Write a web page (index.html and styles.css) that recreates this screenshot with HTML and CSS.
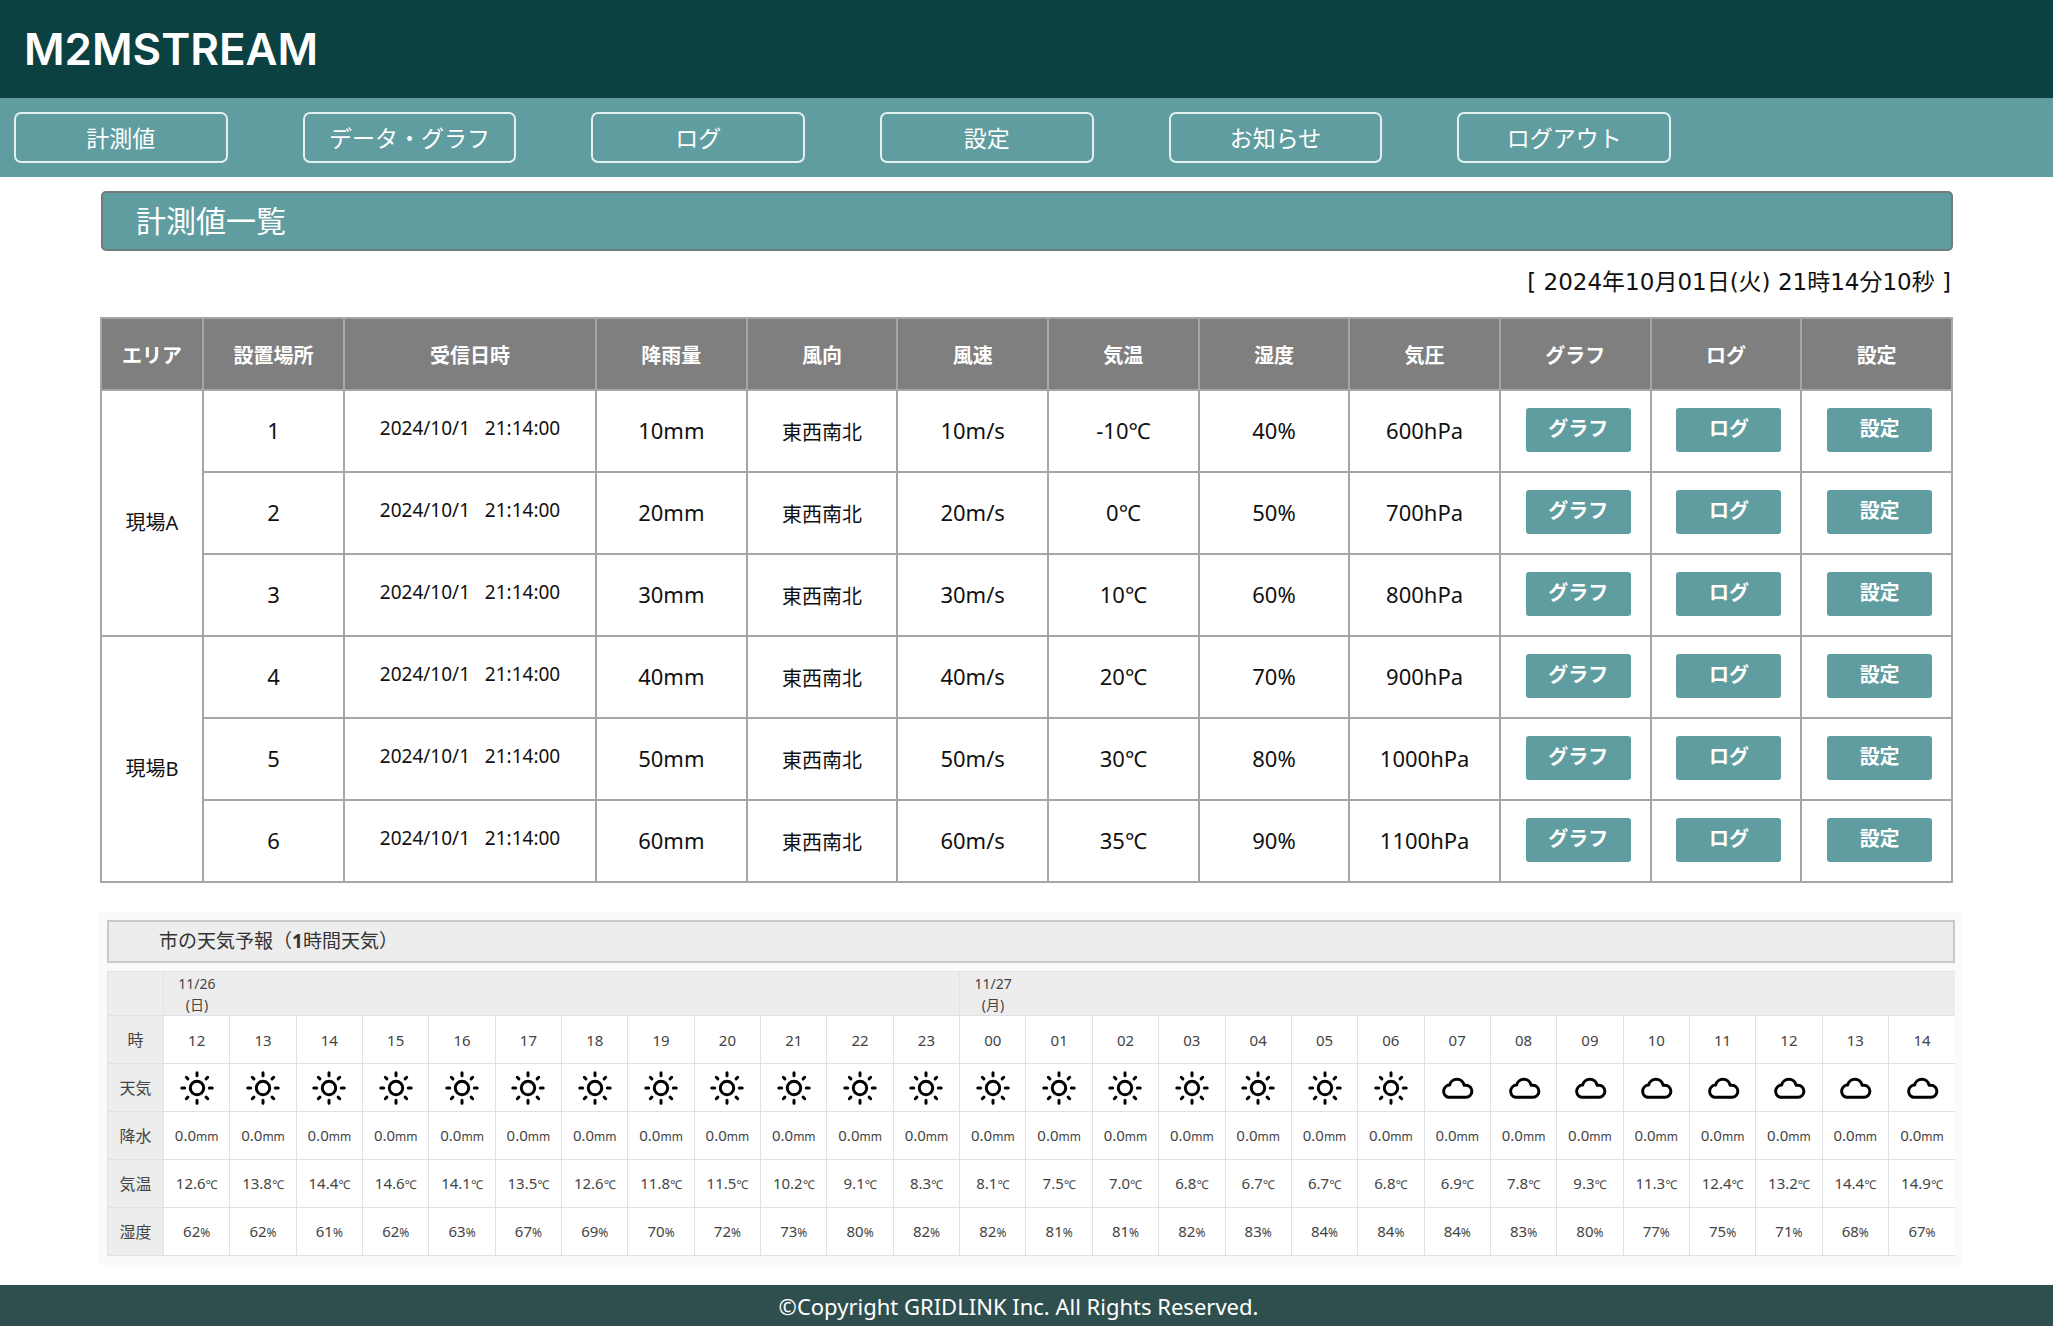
FILE: index.html
```html
<!DOCTYPE html>
<html lang="ja">
<head>
<meta charset="utf-8">
<title>M2MSTREAM 計測値一覧</title>
<link rel="stylesheet" href="styles.css">
</head>
<body>
<svg class="sprite" aria-hidden="true">
  <symbol id="sun" viewBox="0 0 34 34">
    <circle cx="17" cy="17" r="6.700"/>
    <path d="M17 1.800v2.900M17 29.300v2.900M1.800 17h2.900M29.300 17h2.900M6.300 6.300l1.600 1.600M26.100 26.100l1.600 1.600M6.300 27.700l1.600-1.600M26.100 7.900l1.600-1.600"/>
  </symbol>
  <symbol id="cloud" viewBox="0 0 34 34">
    <path d="M8.300 26.300h17.600a5.900 5.900 0 0 0 0-12h-1.800a7.400 7.400 0 0 0-14.500-.200a6.200 6.200 0 0 0-1.300 12.200z"/>
  </symbol>
</svg>
<header class="site-header"><h1 class="logo">M2MSTREAM</h1></header>
<nav class="site-nav">
  <div class="nav-list">
    <button type="button">計測値</button>
    <button type="button">データ・グラフ</button>
    <button type="button">ログ</button>
    <button type="button">設定</button>
    <button type="button">お知らせ</button>
    <button type="button">ログアウト</button>
  </div>
</nav>
<main class="content">
  <h2 class="page-title">計測値一覧</h2>
  <p class="clock">[ 2024年10月01日(火) 21時14分10秒 ]</p>
  <table class="readings">
    <colgroup><col class="c-area"><col class="c-place"><col class="c-time"><col span="9"></colgroup>
    <thead>
      <tr><th>エリア</th><th>設置場所</th><th>受信日時</th><th>降雨量</th><th>風向</th><th>風速</th><th>気温</th><th>湿度</th><th>気圧</th><th>グラフ</th><th>ログ</th><th>設定</th></tr>
    </thead>
    <tbody id="readings"></tbody>
  </table>
  <section class="forecast">
    <h3 class="forecast-title">市の天気予報（<b>1</b>時間天気）</h3>
    <table class="hourly">
      <colgroup><col class="c-label"><col span="27"></colgroup>
      <tbody id="hourly">
        <tr class="days"><th></th><td>11/26<br>(日)</td><td colspan="11"></td><td class="day-start">11/27<br>(月)</td><td colspan="14"></td></tr>
      </tbody>
    </table>
  </section>
</main>
<footer class="site-footer">©Copyright GRIDLINK Inc. All Rights Reserved.</footer>
<script src="app.js"></script>
</body>
</html>
```
FILE: styles.css
```css
* { box-sizing: border-box; }
body {
  margin: 0;
  min-height: 100vh;
  display: flex;
  flex-direction: column;
  background: #fff;
  color: #111;
  font-family: "Noto Sans", "Noto Sans CJK JP", sans-serif;
}
h1, h2, h3, p { margin: 0; font-weight: 400; }
button { font-family: inherit; color: #fff; cursor: pointer; }
table { width: 100%; border-collapse: collapse; table-layout: fixed; }
th, td { padding: 0; text-align: center; }
.sprite { display: none; }

.site-header {
  height: 98px;
  display: flex;
  align-items: center;
  padding: 0 24px;
  background: #0b4141;
}
.logo {
  color: #fff;
  font-family: Inter, sans-serif;
  font-weight: 600;
  font-size: 44px;
  line-height: 44px;
}
.site-nav {
  padding: 14px;
  background: #5f9da0;
}
.nav-list {
  display: grid;
  grid-template-columns: repeat(6, 1fr);
  column-gap: 75px;
  max-width: 1657px;
}
.nav-list button {
  height: 51px;
  padding: 0 0 2px;
  border: 2px solid #e4efef;
  border-radius: 7px;
  background: none;
  font-size: 23px;
}

.content { padding: 14px 91px 20px 100px; }
.page-title {
  margin: 0 9px 0 1px;
  padding: 0 33px;
  border: 2px solid #6f7c7c;
  border-radius: 5px;
  background: #5f9da0;
  color: #fff;
  font-size: 30px;
  line-height: 56px;
}
.clock {
  margin: 15px 11px 19px 0;
  text-align: right;
  font-family: "DejaVu Sans", "Noto Sans CJK JP", sans-serif;
  font-size: 23px;
  line-height: 32px;
}

.readings { width: calc(100% - 9px); font-size: 22px; line-height: 32px; }
.readings th, .readings td { border: 2px solid #a6a6a6; }
.readings .c-area { width: 102px; }
.readings .c-place { width: 141px; }
.readings .c-time { width: 252px; }
.readings thead th {
  height: 72px;
  padding-top: 3px;
  background: #7f7f7f;
  color: #fff;
  font-size: 20px;
  font-weight: 700;
}
.readings tbody td, .readings tbody th { height: 82px; font-weight: 400; }
.readings tbody td { padding-bottom: 2px; }
.readings tbody th, .readings .kanji { font-size: 20px; }
.readings tbody th { padding-top: 20px; }
.readings tbody .kanji { padding: 4px 0 0; }
.readings tbody .time { padding-bottom: 7px; font-size: 19px; white-space: pre; }
.readings .action { padding-left: 6px; }
.action button {
  display: block;
  width: 105px;
  height: 44px;
  margin: 0 auto;
  padding: 0 0 5px;
  border: 0;
  border-radius: 3px;
  background: #5f9da0;
  font-size: 20px;
  font-weight: 700;
}

.forecast {
  margin: 29px 0 0 -1px;
  padding: 8px 7px 9px 8px;
  background: #fafafa;
  color: #444;
}
.forecast-title {
  margin-bottom: 8px;
  padding: 0 50px;
  border: 2px solid #c9c9c9;
  background: #ededed;
  color: #333;
  font-size: 19px;
  line-height: 39px;
}
.hourly { background: #fff; font-size: 15px; line-height: 20px; }
.hourly .c-label { width: 56px; }
.hourly th, .hourly td { height: 48px; border: 1px solid #dee2e6; }
.hourly td:last-child { border-right: 0; }
.hourly th { background: #ededed; font-size: 16px; font-weight: 400; }
.hourly .days th { height: 44px; }
.hourly .days td { height: 44px; border-width: 1px 0; background: #ededed; font-size: 14px; line-height: 21px; }
.hourly .days .day-start { border-left-width: 1px; }
.hourly small { font-size: 12px; }
.hourly svg {
  display: block;
  width: 34px;
  height: 34px;
  margin: 0 auto;
  fill: none;
  stroke: #000;
  stroke-width: 3;
  stroke-linecap: round;
  stroke-linejoin: round;
}

.site-footer {
  flex: 1 0 auto;
  padding: 5px 16px 5px 0;
  background: #2f4f4f;
  color: #fff;
  text-align: center;
  font-size: 22px;
  line-height: 33px;
}
```
FILE: app.js
```js
const readings = [
  ['10mm', '10m/s', '-10℃', '40%', '600hPa'],
  ['20mm', '20m/s', '0℃', '50%', '700hPa'],
  ['30mm', '30m/s', '10℃', '60%', '800hPa'],
  ['40mm', '40m/s', '20℃', '70%', '900hPa'],
  ['50mm', '50m/s', '30℃', '80%', '1000hPa'],
  ['60mm', '60m/s', '35℃', '90%', '1100hPa']
];
const areas = { 0: '現場A', 3: '現場B' };

document.getElementById('readings').innerHTML = readings.map(([rain, wind, temp, hum, press], i) => `
  <tr>${areas[i] ? `<th rowspan="3">${areas[i]}</th>` : ''}
    <td>${i + 1}</td><td class="time">2024/10/1   21:14:00</td><td>${rain}</td><td class="kanji">東西南北</td>
    <td>${wind}</td><td>${temp}</td><td>${hum}</td><td>${press}</td>
    ${['グラフ', 'ログ', '設定'].map(t => `<td class="action"><button type="button">${t}</button></td>`).join('')}
  </tr>`).join('');

const temps = '12.6 13.8 14.4 14.6 14.1 13.5 12.6 11.8 11.5 10.2 9.1 8.3 8.1 7.5 7.0 6.8 6.7 6.7 6.8 6.9 7.8 9.3 11.3 12.4 13.2 14.4 14.9'.split(' ');
const hums = '62 62 61 62 63 67 69 70 72 73 80 82 82 81 81 82 83 84 84 84 83 80 77 75 71 68 67'.split(' ');
const row = (label, cell) => `<tr><th>${label}</th>${temps.map((_, i) => `<td>${cell(i)}</td>`).join('')}</tr>`;

document.getElementById('hourly').insertAdjacentHTML('beforeend',
  row('時', i => String((12 + i) % 24).padStart(2, '0')) +
  row('天気', i => `<svg role="img" aria-label="${i < 19 ? '晴れ' : 'くもり'}"><use href="#${i < 19 ? 'sun' : 'cloud'}"/></svg>`) +
  row('降水', () => '0.0<small>mm</small>') +
  row('気温', i => `${temps[i]}<small>℃</small>`) +
  row('湿度', i => `${hums[i]}<small>%</small>`));
```
